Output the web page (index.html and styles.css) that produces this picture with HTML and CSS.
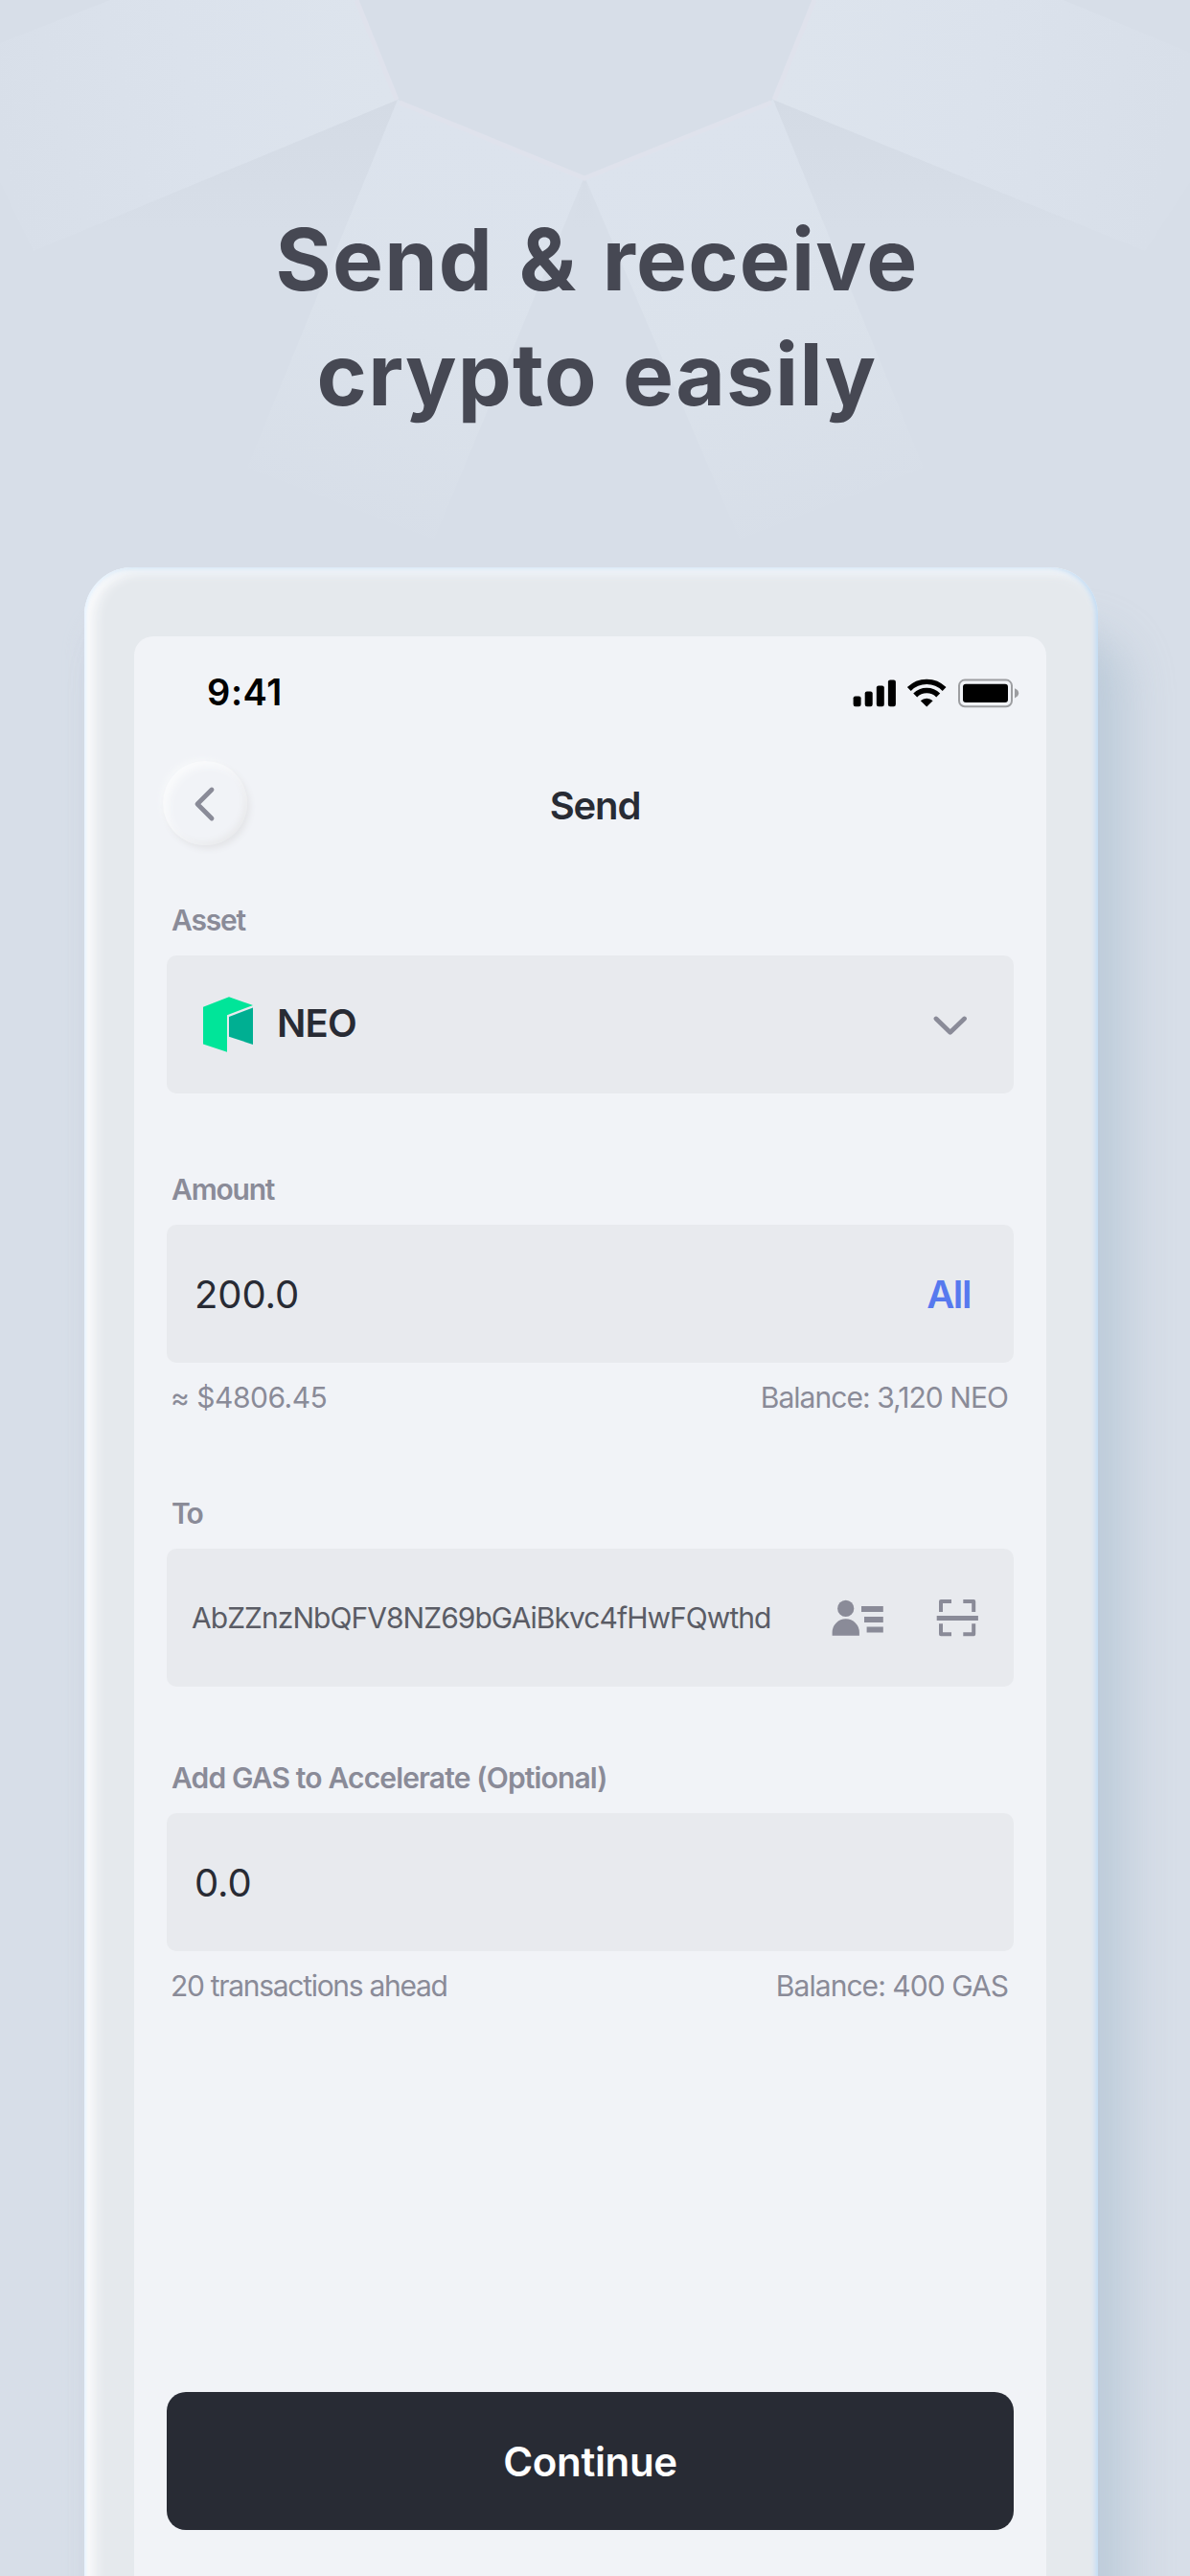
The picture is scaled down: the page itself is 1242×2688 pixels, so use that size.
FILE: index.html
```html
<!DOCTYPE html>
<html lang="en">
<head>
<meta charset="utf-8">
<title>Send &amp; receive crypto easily</title>
<link rel="stylesheet" href="styles.css">
</head>
<body>
<main class="poster">
  <svg class="facets" viewBox="0 0 1242 600" aria-hidden="true">
    <defs>
      <linearGradient id="wing-left" gradientUnits="userSpaceOnUse" x1="400" y1="60" x2="0" y2="150">
        <stop offset="0" stop-color="#dde4ed"/><stop offset=".5" stop-color="#dbe2ec"/><stop offset="1" stop-color="#d8dfe9"/>
      </linearGradient>
      <linearGradient id="wing-right" gradientUnits="userSpaceOnUse" x1="822" y1="60" x2="1222" y2="150">
        <stop offset="0" stop-color="#dde4ed"/><stop offset=".5" stop-color="#dbe2ec"/><stop offset="1" stop-color="#d8dfe9"/>
      </linearGradient>
      <linearGradient id="blade-left" gradientUnits="userSpaceOnUse" x1="500" y1="140" x2="345" y2="550">
        <stop offset="0" stop-color="#dce3ed"/><stop offset=".5" stop-color="#dbe2eb"/><stop offset="1" stop-color="#d7dee8"/>
      </linearGradient>
      <linearGradient id="blade-right" gradientUnits="userSpaceOnUse" x1="722" y1="140" x2="877" y2="550">
        <stop offset="0" stop-color="#dce3ed"/><stop offset=".5" stop-color="#dbe2eb"/><stop offset="1" stop-color="#d7dee8"/>
      </linearGradient>
      <linearGradient id="shade" gradientUnits="userSpaceOnUse" x1="0" y1="104" x2="0" y2="240">
        <stop offset="0" stop-color="#d4dbe5"/><stop offset="1" stop-color="#d7dee8"/>
      </linearGradient>
    </defs>
    <path fill="url(#shade)" d="M415 104 35 262 360 300ZM807 104 1195 262 862 300ZM610 184 580 300H640Z"/>
    <path fill="url(#wing-left)" d="M115 0H374L415 104 35 262 0 190V45Z"/>
    <path fill="url(#wing-right)" d="M1110 0H848L807 104 1195 262 1242 190V55Z"/>
    <path fill="url(#blade-left)" d="M415 104 610 184 453 563 258 488Z"/>
    <path fill="url(#blade-right)" d="M807 104 610 184 772 563 964 488Z"/>
    <path class="facet-edge" d="M372 0 414 104M850 0 808 104M417 107 610 186 805 107"/>
  </svg>

  <h1 class="headline">Send &amp; receive<br>crypto easily</h1>

  <section class="phone">
    <div class="screen">
      <div class="status">
        <span class="time">9:41</span>
        <svg width="176" height="34" viewBox="0 -1 176 34" aria-hidden="true">
          <rect x="1.6" y="20.4" width="8" height="10.8" rx="2.2"/>
          <rect x="13.7" y="15.4" width="8" height="15.8" rx="2.2"/>
          <rect x="25.8" y="9.4" width="8" height="21.8" rx="2.2"/>
          <rect x="37.9" y="3.4" width="8" height="27.8" rx="2.2"/>
          <path fill="none" stroke="#000" stroke-width="5.4" d="M59.8 13A26 26 0 0 1 96.6 13"/>
          <path fill="none" stroke="#000" stroke-width="5.6" d="M66.2 19.4A17 17 0 0 1 90.2 19.4"/>
          <path d="M78.2 31.4 71.8 25.2A9.3 9.3 0 0 1 84.6 25.2Z"/>
          <rect x="112" y="3.6" width="55" height="27.6" rx="6" fill="none" stroke="#9d9ea1" stroke-width="2"/>
          <rect x="116" y="7.7" width="47" height="19.2" rx="3"/>
          <path fill="#9d9ea1" d="M170 12.3Q174.2 14 174.2 17.3T170 22.4Z"/>
        </svg>
      </div>

      <header class="nav">
        <span class="back">
          <svg width="24" height="40" viewBox="0 0 24 40" aria-hidden="true"><path class="chevron" d="M19 6 4 21 19 36"/></svg>
        </span>
        <h2 class="nav-title">Send</h2>
      </header>

      <div class="form">
        <div class="group asset">
          <div class="label">Asset</div>
          <div class="field">
            <svg width="52" height="60" viewBox="0 0 52 60" aria-hidden="true">
              <path fill="#00e599" d="M0 11.7 27 1.3 52 10 25 20.3V58.8L0 50.5Z"/>
              <path fill="#00af92" d="M27 22 52 12.5V51L27 42.7Z"/>
            </svg>
            <span class="token">NEO</span>
            <svg class="drop" width="36" height="22" viewBox="0 0 36 22" aria-hidden="true"><path class="chevron" d="M3 4 17.7 18.2 32.5 4"/></svg>
          </div>
        </div>

        <div class="group amount">
          <div class="label">Amount</div>
          <div class="field"><span class="value">200.0</span><span class="all">All</span></div>
          <div class="foot"><span class="approx">≈ $4806.45</span><span class="balance">Balance: 3,120 NEO</span></div>
        </div>

        <div class="group to">
          <div class="label label-to">To</div>
          <div class="field">
            <span class="address">AbZZnzNbQFV8NZ69bGAiBkvc4fHwFQwthd</span>
            <span class="tools">
              <svg width="54" height="40" viewBox="0 0 54 40" aria-hidden="true">
                <circle cx="14.7" cy="10.4" r="8.6"/>
                <path d="M.6 38.8V35.5A14.1 14.1 0 0 1 28.9 35.5V38.8ZM31 8h22.8v6H31ZM34 18.9h19.8v6H34ZM36.6 29.6h17.2v6H36.6Z"/>
              </svg>
              <svg width="44" height="40" viewBox="0 0 44 40" aria-hidden="true">
                <path d="M.7 17.9h43.2v5H.7Z"/>
                <path class="corners" d="M5 14V3H16M28.3 3H39.2V14M39.2 26.3V37.2H28.3M16 37.2H5V26.3"/>
              </svg>
            </span>
          </div>
        </div>

        <div class="group gas">
          <div class="label label-gas">Add GAS to Accelerate (Optional)</div>
          <div class="field"><span class="value">0.0</span></div>
          <div class="foot"><span class="ahead">20 transactions ahead</span><span class="balance">Balance: 400 GAS</span></div>
        </div>

        <button class="continue" type="button">Continue</button>
      </div>
    </div>
  </section>
</main>
</body>
</html>
```
FILE: styles.css
```css
* { box-sizing: border-box; }

body {
  margin: 0;
  font-family: Inter, "Liberation Sans", sans-serif;
  color: #282b34;
}

.poster {
  position: relative;
  width: 1242px;
  height: 2688px;
  overflow: hidden;
  padding: 211px 96px 0 88px;
  background: #d7dee8;
}

.facets {
  position: absolute;
  inset: 0 auto auto 0;
  width: 1242px;
  height: 600px;
}

.facet-edge {
  fill: none;
  stroke: #dfe2ec;
  stroke-width: 5;
}

.headline {
  position: relative;
  margin: 0 -6px 141px 6px;
  font-size: 89px;
  line-height: 120px;
  font-weight: 700;
  letter-spacing: 1.2px;
  word-spacing: 4px;
  text-align: center;
  color: #464853;
}

.phone {
  position: relative;
  height: 2200px;
  padding: 72px 54px 0 52px;
  border-radius: 50px;
  background: #e5e9ed;
  box-shadow:
    inset 3px 0 3px -1px #e8f4ff,
    inset -4px 0 5px -1px #c3dcf4,
    inset 0 5px 6px -2px #e2edf7,
    inset 12px 4px 14px -2px #fcfcfd,
    inset 0 12px 12px -6px #edf1f5,
    32px 70px 46px rgba(158, 182, 199, .42),
    -2px 40px 20px rgba(208, 214, 230, .4);
}

.screen {
  width: 952px;
  height: 2100px;
  padding-top: 34px;
  border-radius: 20px;
  background: #f1f3f7;
}

.status {
  display: flex;
  justify-content: space-between;
  align-items: center;
  height: 48px;
  padding: 0 27px 0 76px;
}

.time {
  font-size: 38px;
  line-height: 48px;
  font-weight: 600;
  letter-spacing: .6px;
  color: #000;
}

.nav {
  display: grid;
  grid-template-columns: 88px 1fr 88px;
  align-items: center;
  height: 88px;
  margin-top: 48px;
  padding: 0 20px 0 30px;
}

.back {
  display: grid;
  place-items: center;
  width: 88px;
  height: 88px;
  border-radius: 50%;
  background: #f1f3f7;
  box-shadow:
    inset 5px 5px 8px #fafbfc,
    inset -3px -3px 6px #e9eaec,
    3px 4px 6px #e4e5e8,
    -3px -3px 5px #f5f7f9;
}

.nav-title {
  margin: 0;
  padding-top: 5px;
  font-size: 40px;
  line-height: 48px;
  font-weight: 600;
  letter-spacing: -1.1px;
  text-align: center;
}

.chevron {
  fill: none;
  stroke: #8a8b98;
  stroke-width: 4.8;
  stroke-linecap: round;
  stroke-linejoin: round;
}

.form {
  padding: 58px 34px 0;
}

.group { display: grid; }
.asset { margin-bottom: 80px; }
.amount { margin-bottom: 81px; }
.to { margin-bottom: 75px; }
.gas { margin-bottom: 404px; }

.label {
  height: 40px;
  margin-bottom: 17px;
  padding-left: 5px;
  font-size: 30px;
  line-height: 40px;
  font-weight: 600;
  letter-spacing: -1.2px;
  color: #8a8b98;
}
.label-to { letter-spacing: -2px; }
.label-gas { letter-spacing: -.84px; }

.field {
  display: flex;
  align-items: center;
  height: 144px;
  padding-left: 29px;
  border-radius: 10px;
  background: #e8eaee;
}

.asset .field { padding: 0 48px 0 38px; }
.to .field { padding: 0 37px 0 26px; }

.token {
  margin-left: 25px;
  padding-bottom: 3px;
  font-size: 40px;
  line-height: 48px;
  font-weight: 600;
  letter-spacing: -.8px;
}

.drop { margin: 2px 0 0 auto; }

.value {
  padding-top: 2px;
  font-size: 40px;
  line-height: 48px;
  letter-spacing: -.1px;
}

.all {
  margin: 0 45px 0 auto;
  padding-top: 2px;
  font-size: 40px;
  line-height: 48px;
  font-weight: 600;
  letter-spacing: -1.4px;
  color: #5779ee;
}

.address {
  font-size: 30px;
  line-height: 40px;
  letter-spacing: -.95px;
  color: #5a5c65;
}

.tools {
  display: flex;
  gap: 55px;
  margin-left: auto;
  fill: #8a8b98;
}

.corners {
  fill: none;
  stroke: #8a8b98;
  stroke-width: 4;
  stroke-linejoin: round;
}

.foot {
  display: flex;
  justify-content: space-between;
  margin-top: 16px;
  padding: 0 6px 0 4px;
  font-size: 30px;
  line-height: 40px;
  color: #8a8b98;
}

.approx { letter-spacing: -.5px; }
.balance { letter-spacing: -.95px; }
.ahead { letter-spacing: -1.3px; }

.continue {
  display: block;
  width: 100%;
  height: 144px;
  padding: 2px 0 0;
  border: 0;
  border-radius: 20px;
  background: #282b34;
  color: #fff;
  font: 600 42px/48px Inter, "Liberation Sans", sans-serif;
  letter-spacing: -.35px;
}
```
